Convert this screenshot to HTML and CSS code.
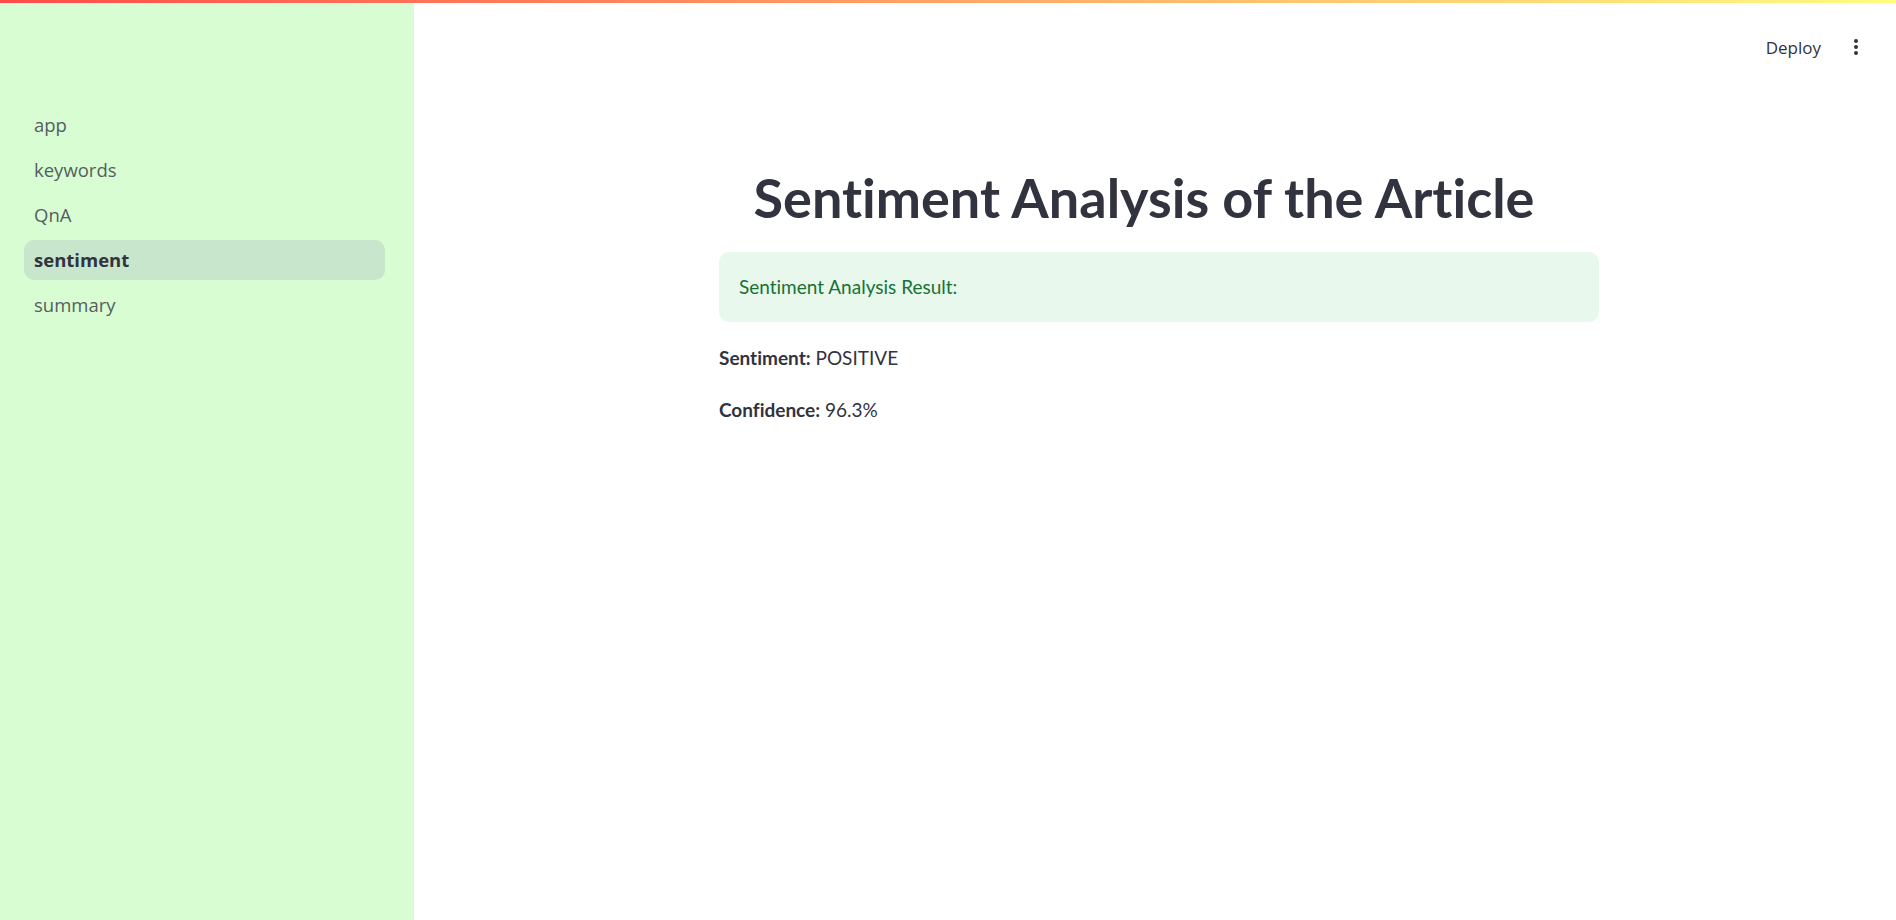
FILE: index.html
```html
<!DOCTYPE html>
<html lang="en">
<head>
<meta charset="utf-8">
<title>sentiment</title>
<link rel="stylesheet" href="styles.css">
</head>
<body>
<div class="decoration"></div>
<div class="app">
  <aside class="sidebar">
    <nav class="nav">
      <a class="nav-item">app</a>
      <a class="nav-item">keywords</a>
      <a class="nav-item">QnA</a>
      <a class="nav-item active">sentiment</a>
      <a class="nav-item">summary</a>
    </nav>
  </aside>
  <main class="main">
    <header class="toolbar">
      <span class="deploy">Deploy</span>
      <svg class="kebab" width="24" height="24" viewBox="0 0 24 24"><circle cx="12" cy="6" r="2"/><circle cx="12" cy="12" r="2"/><circle cx="12" cy="18" r="2"/></svg>
    </header>
    <section class="content">
      <h1 class="title">Sentiment Analysis of the Article</h1>
      <div class="alert-success">Sentiment Analysis Result:</div>
      <p class="line"><strong>Sentiment:</strong> POSITIVE</p>
      <p class="line"><strong>Confidence:</strong> 96.3%</p>
    </section>
  </main>
</div>
</body>
</html>
```
FILE: styles.css
```css
* { box-sizing: border-box; }
html, body { margin: 0; padding: 0; height: 100%; }
body {
  font-family: "Lato", "Liberation Sans", sans-serif;
  font-variant-ligatures: none;
  color: #31333f;
  background: #ffffff;
  overflow: hidden;
}
.decoration {
  position: fixed;
  top: 0; left: 0; right: 0;
  height: 3px;
  background: linear-gradient(90deg, #ff4b4b, #fffd80);
  z-index: 10;
}
.app {
  display: flex;
  height: 920px;
}
.sidebar {
  width: 414px;
  flex: 0 0 414px;
  background: #d8fdd2;
  padding: 105px 29px 0 24px;
}
.nav {
  display: flex;
  flex-direction: column;
  gap: 5px;
}
.nav-item {
  display: block;
  height: 40px;
  line-height: 40px;
  padding-left: 10px;
  border-radius: 10px;
  font-family: "Open Sans", "Noto Sans", sans-serif;
  font-size: 18.5px;
  color: #555d62;
}
.nav-item.active {
  background: #c8e6cc;
  color: #31333f;
  font-weight: 700;
}
.main {
  flex: 1;
  display: flex;
  flex-direction: column;
  padding-left: 8px;
}
.toolbar {
  height: 94px;
  display: flex;
  justify-content: flex-end;
  align-items: center;
  padding-right: 28px;
  gap: 23px;
}
.deploy {
  font-family: "Open Sans", "Noto Sans", sans-serif;
  font-size: 17px;
  color: #31333f;
}
.kebab { fill: #31333f; display: block; }
.content {
  width: 880px;
  margin: 0 auto;
  padding-top: 71px;
}
.title {
  margin: 0 0 22px;
  padding-right: 30px;
  text-align: center;
  font-size: 54px;
  line-height: 65px;
  font-weight: 700;
  color: #31333f;
}
.alert-success {
  height: 70px;
  padding: 20px;
  border-radius: 10px;
  background: #e8f8ed;
  color: #177233;
  font-size: 19px;
  line-height: 30px;
  margin-bottom: 21px;
}
.line {
  margin: 0 0 22px;
  font-size: 19px;
  line-height: 30px;
}
.line strong { font-weight: 700; }
```
